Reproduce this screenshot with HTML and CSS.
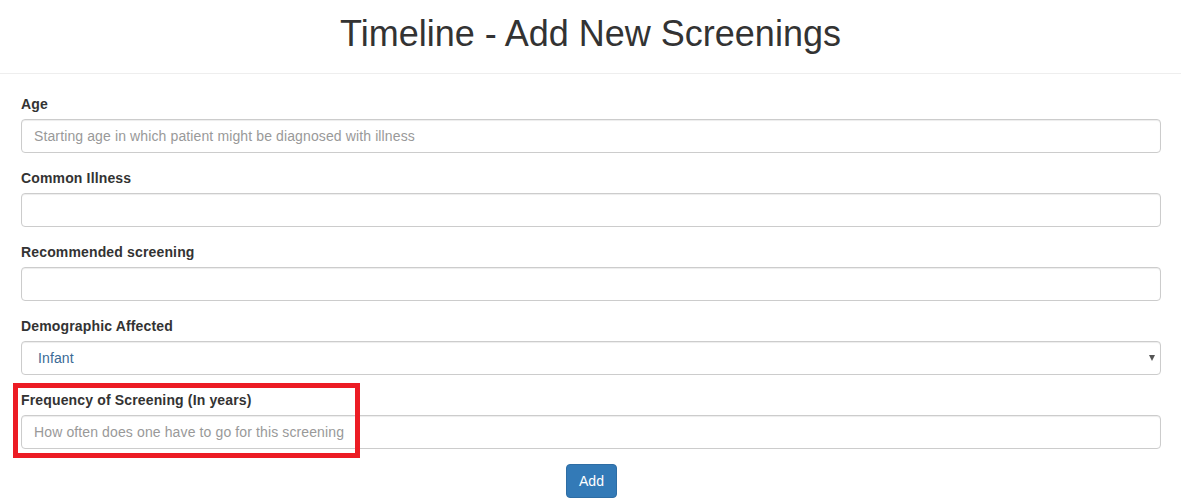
FILE: index.html
```html
<!DOCTYPE html>
<html lang="en">
<head>
<meta charset="utf-8">
<title>Timeline - Add New Screenings</title>
<link rel="stylesheet" href="styles.css">
</head>
<body>
<header class="page-header">
  <h1 class="title">Timeline - Add New Screenings</h1>
</header>
<form class="form">
  <div class="group">
    <label class="label">Age</label>
    <input class="control" type="text" placeholder="Starting age in which patient might be diagnosed with illness">
  </div>
  <div class="group">
    <label class="label">Common Illness</label>
    <input class="control" type="text">
  </div>
  <div class="group">
    <label class="label">Recommended screening</label>
    <input class="control" type="text">
  </div>
  <div class="group">
    <label class="label">Demographic Affected</label>
    <div class="select-wrap">
      <select class="control select">
        <option>Infant</option>
      </select>
      <span class="arrow"></span>
    </div>
  </div>
  <div class="group highlighted">
    <label class="label">Frequency of Screening (In years)</label>
    <input class="control" type="text" placeholder="How often does one have to go for this screening">
    <span class="highlight-box"></span>
  </div>
  <div class="actions">
    <button class="btn" type="button">Add</button>
  </div>
</form>
</body>
</html>
```

FILE: styles.css
```css
* { box-sizing: border-box; }

html, body {
  margin: 0;
  padding: 0;
  background: #fff;
  font-family: "Liberation Sans", Arial, Helvetica, sans-serif;
  font-size: 14px;
  line-height: 20px;
  color: #333;
}

.page-header {
  padding: 14px 0 9px;
  border-bottom: 1px solid #eee;
}

.title {
  margin: 0 0 10px;
  font-size: 36px;
  font-weight: 400;
  line-height: 39.6px;
  text-align: center;
  color: #333;
}

.form {
  margin: 20px 0 0;
  padding: 0 20px 0 21px;
}

.group {
  margin-bottom: 15px;
}

.highlighted {
  position: relative;
}

.label {
  display: block;
  margin-bottom: 5px;
  font-weight: 700;
  font-size: 14px;
  line-height: 20px;
  letter-spacing: 0.15px;
  color: #333;
}

.control {
  display: block;
  width: 100%;
  height: 34px;
  padding: 6px 12px;
  font-family: "Liberation Sans", Arial, Helvetica, sans-serif;
  font-size: 14px;
  line-height: 20px;
  letter-spacing: 0.12px;
  color: #555;
  background: #fff;
  border: 1px solid #ccc;
  border-radius: 4px;
  box-shadow: inset 0 1px 1px rgba(0, 0, 0, 0.075);
  outline: none;
}

.control::placeholder {
  color: #999;
  opacity: 1;
}

.select-wrap {
  position: relative;
}

.select {
  appearance: none;
  -webkit-appearance: none;
  padding-left: 16px;
  color: #3a6a96;
}

.arrow {
  position: absolute;
  right: 6px;
  top: 14px;
  width: 0;
  height: 0;
  border-left: 3.5px solid transparent;
  border-right: 3.5px solid transparent;
  border-top: 6px solid #555;
  pointer-events: none;
}

.highlight-box {
  position: absolute;
  left: -8px;
  top: -7px;
  width: 347px;
  height: 75px;
  border: 5px solid #ec1c24;
  pointer-events: none;
}

.actions {
  display: flex;
  justify-content: center;
  padding-left: 1px;
}

.btn {
  height: 34px;
  padding: 6px 12px;
  font-family: "Liberation Sans", Arial, Helvetica, sans-serif;
  font-size: 14px;
  line-height: 20px;
  color: #fff;
  background: #337ab7;
  border: 1px solid #2e6da4;
  border-radius: 4px;
  cursor: pointer;
}
```
